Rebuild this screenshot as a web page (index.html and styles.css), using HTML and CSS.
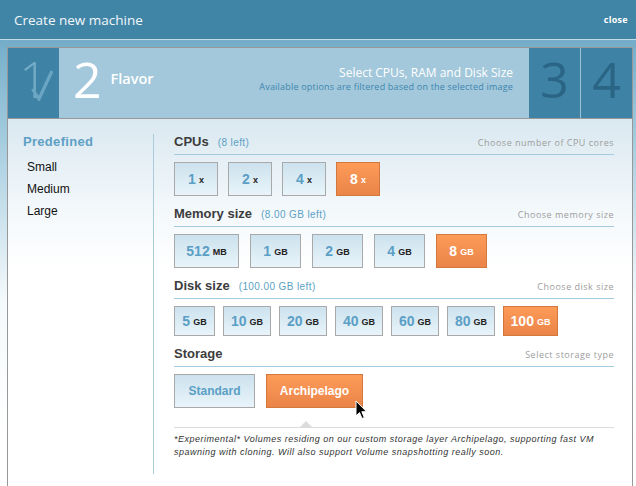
FILE: index.html
```html
<!DOCTYPE html>
<html>
<head>
<meta charset="utf-8">
<link rel="stylesheet" href="styles.css">
</head>
<body>
<div class="modal">
  <header class="topbar">
    <h1 class="title">Create new machine</h1>
    <span class="close">close</span>
  </header>
  <div class="backdrop">
    <div class="panel">
      <div class="steps">
        <div class="step done">
          <span class="num">1</span>
          <svg class="check" width="23" height="31" viewBox="0 0 23 31"><path d="M1.5 19 L8 29 L21 1" fill="none" stroke="#6aa6c3" stroke-width="3.2" stroke-linejoin="miter"/></svg>
        </div>
        <div class="step current">
          <span class="num">2</span>
          <span class="step-title">Flavor</span>
          <div class="step-desc">
            <div class="d1">Select CPUs, RAM and Disk Size</div>
            <div class="d2">Available options are filtered based on the selected image</div>
          </div>
        </div>
        <div class="step next"><span class="num">3</span></div>
        <div class="step next last"><span class="num">4</span></div>
      </div>
      <div class="content">
        <aside class="sidebar">
          <div class="side-title">Predefined</div>
          <ul class="presets">
            <li>Small</li>
            <li>Medium</li>
            <li>Large</li>
          </ul>
        </aside>
        <main class="main">
          <section class="section">
            <div class="sec-head"><h2>CPUs</h2><span class="left">(8 left)</span><span class="hint">Choose number of CPU cores</span></div>
            <div class="opts cpu">
              <div class="opt">1<small>x</small></div>
              <div class="opt">2<small>x</small></div>
              <div class="opt">4<small>x</small></div>
              <div class="opt sel">8<small>x</small></div>
            </div>
          </section>
          <section class="section">
            <div class="sec-head"><h2>Memory size</h2><span class="left">(8.00 GB left)</span><span class="hint">Choose memory size</span></div>
            <div class="opts mem">
              <div class="opt wide">512<small>MB</small></div>
              <div class="opt">1<small>GB</small></div>
              <div class="opt">2<small>GB</small></div>
              <div class="opt">4<small>GB</small></div>
              <div class="opt sel">8<small>GB</small></div>
            </div>
          </section>
          <section class="section">
            <div class="sec-head"><h2>Disk size</h2><span class="left">(100.00 GB left)</span><span class="hint">Choose disk size</span></div>
            <div class="opts disk">
              <div class="opt narrow">5<small>GB</small></div>
              <div class="opt">10<small>GB</small></div>
              <div class="opt">20<small>GB</small></div>
              <div class="opt">40<small>GB</small></div>
              <div class="opt">60<small>GB</small></div>
              <div class="opt">80<small>GB</small></div>
              <div class="opt sel wide">100<small>GB</small></div>
            </div>
          </section>
          <section class="section">
            <div class="sec-head"><h2>Storage</h2><span class="hint">Select storage type</span></div>
            <div class="opts storage">
              <div class="opt std">Standard</div>
              <div class="opt sel arch">Archipelago<svg class="cursor" width="13" height="21" viewBox="0 0 13 21"><path d="M1 1 L1 16 L4.5 12.5 L7 18.5 L9.3 17.5 L6.8 11.7 L11.5 11.7 Z" fill="#000" stroke="#fff" stroke-width="1"/></svg></div>
            </div>
          </section>
          <div class="note">*Experimental* Volumes residing on our custom storage layer Archipelago, supporting fast VM spawning with cloning. Will also support Volume snapshotting really soon.</div>
        </main>
      </div>
    </div>
  </div>
</div>
</body>
</html>
```

FILE: styles.css
```css
html, body {
  margin: 0;
  padding: 0;
}
body {
  width: 636px;
  height: 486px;
  overflow: hidden;
  font-family: "Liberation Sans", Arial, sans-serif;
  background: #fff;
}
.modal {
  width: 636px;
  height: 486px;
  display: flex;
  flex-direction: column;
}
.topbar {
  height: 39px;
  flex: none;
  background: #4185a6;
  border-bottom: 1px solid #c4dce8;
  display: flex;
  align-items: center;
  justify-content: space-between;
  padding: 0 8px 0 14px;
}
.title {
  margin: 0;
  font-family: "Open Sans", sans-serif;
  font-weight: 400;
  font-size: 13.5px;
  color: #f2f7fa;
}
.close {
  font-family: "Open Sans", sans-serif;
  font-weight: 700;
  font-size: 9px;
  color: #fff;
  letter-spacing: 0.3px;
}
.backdrop {
  flex: 1;
  padding: 7px 3px 0 7px;
  background: linear-gradient(#74adc9 0, #a9cfe1 110px, #f4f9fb 260px, #fff 400px);
}
.panel {
  height: 100%;
  box-sizing: border-box;
  border: 1px solid #989898;
  border-bottom: none;
  background: #fff;
  display: flex;
  flex-direction: column;
}
.steps {
  display: flex;
  height: 70px;
  border-bottom: 1px solid #999;
  font-family: "Open Sans", sans-serif;
}
.step {
  position: relative;
  display: flex;
}
.step .num {
  font-size: 50px;
  font-weight: 400;
  line-height: 62px;
}
.step.done {
  width: 51px;
  background: #3e83a5;
  justify-content: center;
}
.step.done .num {
  color: #73abc7;
  font-weight: 300;
}
.check {
  position: absolute;
  left: 23px;
  top: 22px;
}
.step.current {
  flex: 1;
  background: #a3c8db;
  padding: 0 16px 0 14px;
}
.step.current .num {
  color: #fff;
}
.step-title {
  color: #fff;
  font-size: 14.5px;
  font-weight: 600;
  line-height: 18px;
  margin: 22px 0 0 9px;
}
.step-desc {
  margin-left: auto;
  margin-top: 18px;
  text-align: right;
}
.d1 {
  color: #fff;
  font-size: 12px;
  line-height: 14px;
}
.d2 {
  color: #3d86ae;
  font-size: 9px;
  line-height: 13px;
  letter-spacing: 0.2px;
}
.step.next {
  width: 51px;
  background: #3e83a5;
  justify-content: center;
}
.step.next .num {
  color: #2b6585;
}
.step.last {
  border-left: 1px solid #9cc3d6;
}
.content {
  flex: 1;
  display: flex;
  padding: 15px 0 13px;
  background: linear-gradient(#dae8f0 0, #f3f8fb 90px, #fff 150px);
}
.sidebar {
  flex: none;
  width: 146px;
  box-sizing: border-box;
  border-right: 1px solid #a9cbdc;
  padding-left: 15px;
}
.side-title {
  font-weight: 700;
  font-size: 13px;
  line-height: 16px;
  color: #5ea0c5;
  letter-spacing: 0.3px;
}
.presets {
  list-style: none;
  margin: 6px 0 0;
  padding: 0 0 0 4px;
}
.presets li {
  font-size: 12px;
  line-height: 22px;
  color: #111;
}
.main {
  flex: 1;
  padding: 0 18px 16px 20px;
}
.section + .section {
  margin-top: 10px;
}
.sec-head {
  display: flex;
  align-items: baseline;
  height: 16px;
  line-height: 16px;
  padding-bottom: 4px;
  border-bottom: 1px solid #a5cbe0;
}
.sec-head h2 {
  margin: 0;
  font-size: 13px;
  font-weight: 700;
  color: #3c3c3c;
}
.left {
  margin-left: 9px;
  font-size: 10px;
  color: #5b9fc4;
  letter-spacing: 0.4px;
}
.hint {
  margin-left: auto;
  font-family: "Open Sans", sans-serif;
  font-size: 9px;
  color: #9d9d9d;
  letter-spacing: 0.5px;
}
.opts {
  display: flex;
  margin-top: 7px;
}
.opt {
  position: relative;
  box-sizing: border-box;
  height: 34px;
  border: 1px solid #a9a9a9;
  background: linear-gradient(#cce2ee, #e9f4fa);
  display: flex;
  align-items: center;
  justify-content: center;
  font-size: 14px;
  font-weight: 700;
  color: #5b9fc5;
  white-space: nowrap;
}
.opt small {
  font-size: 9px;
  color: #222;
  margin-left: 3px;
  position: relative;
  top: 1px;
}
.opt.sel {
  background: linear-gradient(#fd9b58, #ea8448);
  border-color: #d2773d;
  color: #fff;
}
.opt.sel small {
  color: #fff;
}
.cpu {
  gap: 10px;
}
.cpu .opt {
  width: 44px;
}
.mem {
  gap: 11px;
}
.mem .opt {
  width: 51px;
}
.mem .opt.wide {
  width: 65px;
}
.disk {
  gap: 8px;
}
.disk .opt {
  width: 48px;
  height: 30px;
}
.disk .opt.narrow {
  width: 41px;
}
.disk .opt.wide {
  width: 55px;
}
.storage {
  gap: 11px;
}
.storage .opt {
  font-size: 12px;
}
.opt.std {
  width: 81px;
}
.opt.arch {
  width: 97px;
}
.cursor {
  position: absolute;
  left: 88px;
  top: 25px;
}
.note {
  position: relative;
  margin-top: 19px;
  border-top: 1px solid #dcdcdc;
  padding-top: 5px;
  font-size: 9px;
  line-height: 12.5px;
  font-style: italic;
  color: #333;
  letter-spacing: 0.5px;
}
.note::before {
  content: "";
  position: absolute;
  left: 126px;
  top: -7px;
  border-left: 6px solid transparent;
  border-right: 6px solid transparent;
  border-bottom: 6px solid #dcdcdc;
}
```
